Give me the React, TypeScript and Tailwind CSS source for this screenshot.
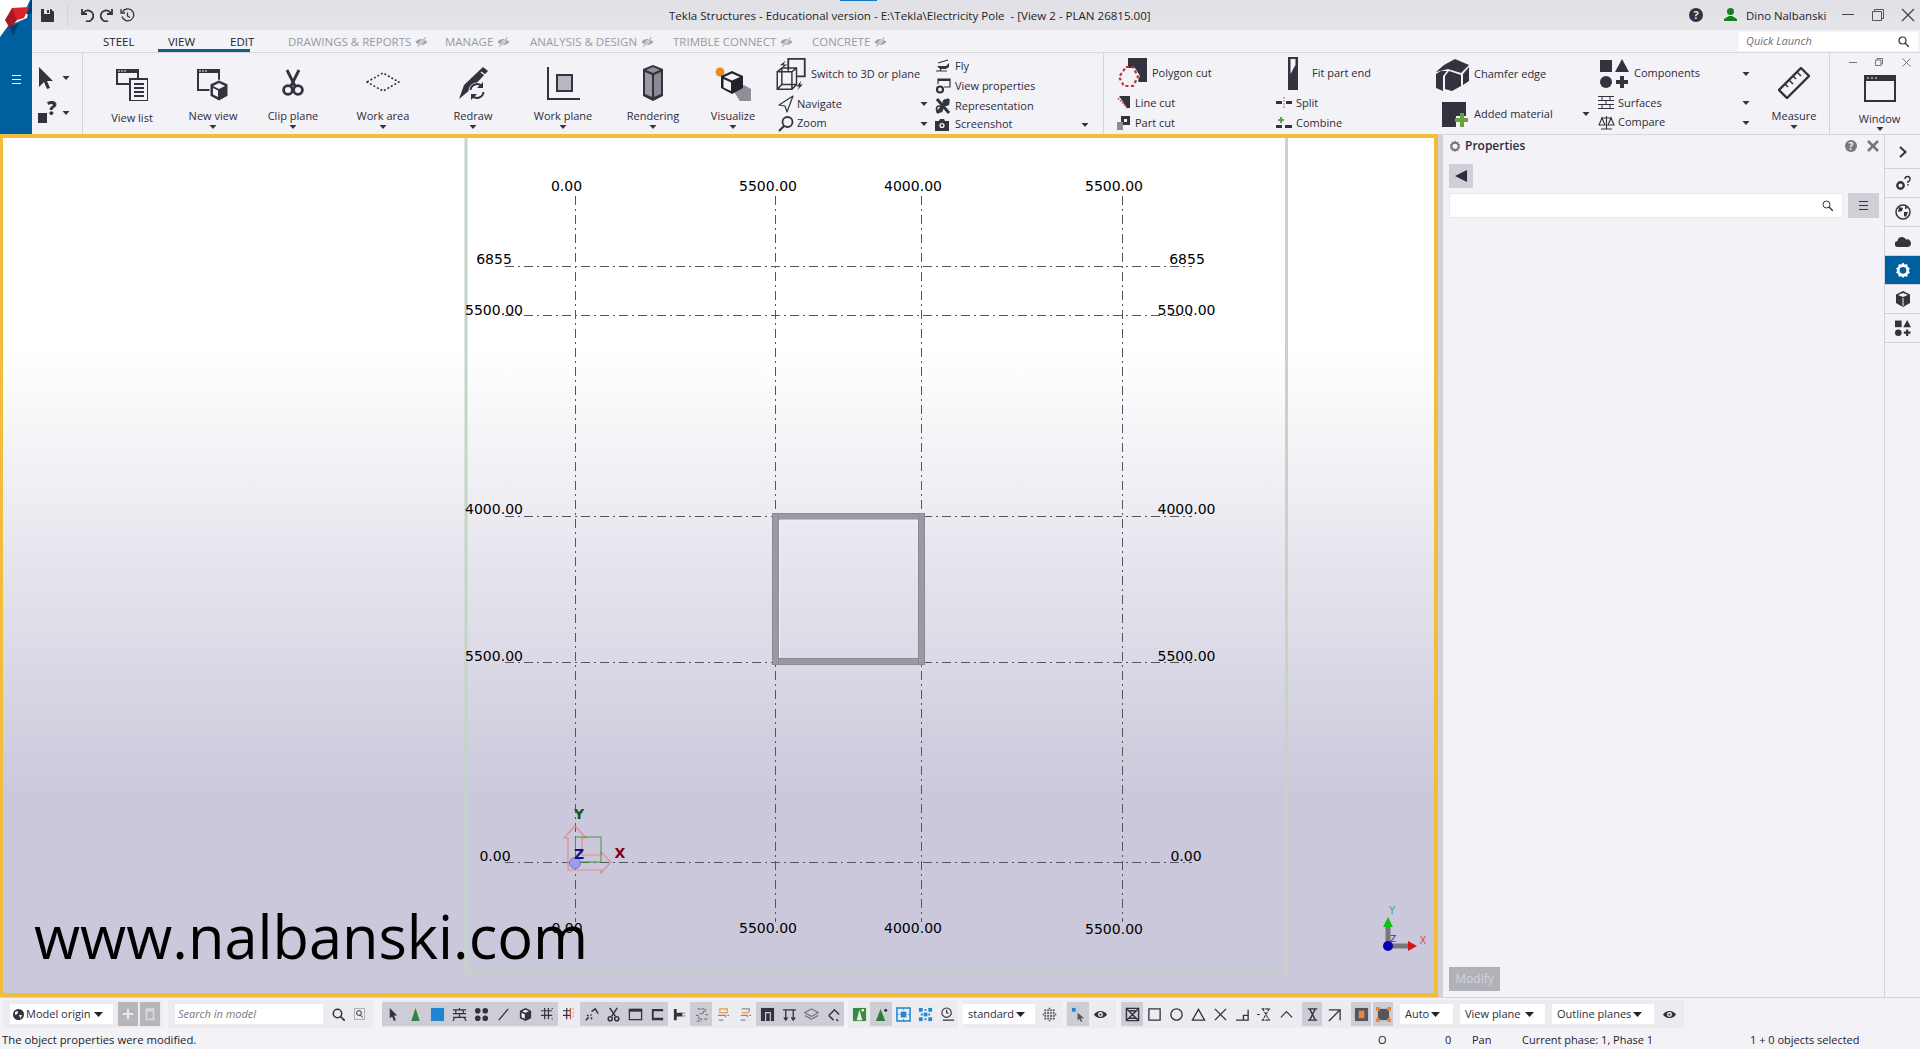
import React from "react";

const D = "#33333f";

const Svg = ({ w, h, vb, children, className = "" }: { w: number; h: number; vb?: string; children: React.ReactNode; className?: string }) => (
  <svg width={w} height={h} viewBox={vb ?? `0 0 ${w} ${h}`} className={`flex-none ${className}`} fill="none">
    {children}
  </svg>
);

const Caret = ({ className = "" }: { className?: string }) => (
  <Svg w={8} h={4} className={className}>
    <path d="M0.5 0H7.5L4 4Z" fill={D} />
  </Svg>
);

const EyeOff = () => (
  <Svg w={13} h={10} className="ml-1">
    <path d="M0.5 5C3 1 9 1 12.5 5C9 9 3 9 0.5 5Z" fill="#a3a3aa" />
    <circle cx="6.5" cy="5" r="1.6" fill="#f2f2f7" />
    <path d="M2.5 9.5L10.5 0.5" stroke="#f2f2f7" strokeWidth="2.4" />
    <path d="M2.5 9.5L10.5 0.5" stroke="#a3a3aa" strokeWidth="1.1" />
  </Svg>
);

/* ---------- ribbon icons ---------- */
const WinSmall = ({ x, y, w, h }: { x: number; y: number; w: number; h: number }) => (
  <g>
    <path d={`M${x + 1} ${y + 1}H${x + w - 1}V${y + h - 1}H${x + 1}Z`} stroke={D} strokeWidth="2" />
    <rect x={x} y={y} width={w} height={4} fill={D} />
    <path d={`M${x + 2} ${y + 2}h2m1 0h2m1 0h2`} stroke="#f2f2f7" strokeWidth="1" />
  </g>
);

const ViewListIcon = () => (
  <Svg w={32} h={32} className="mt-[3px]">
    <WinSmall x={0} y={0} w={23} h={16} />
    <rect x={14} y={10} width={18} height={22} fill="#f2f2f7" stroke={D} strokeWidth="2" />
    <path d="M18 15h10M18 19h10M18 23h10M18 27h10" stroke={D} strokeWidth="2" />
  </Svg>
);
const NewViewIcon = () => (
  <Svg w={32} h={32} className="mt-[3px]">
    <WinSmall x={0} y={0} w={23} h={22} />
    <path d="M22 11L31 15V27L22 32L13 27V15Z" fill={D} stroke="#f2f2f7" strokeWidth="1" />
    <path d="M16 17L22 20L28 17L22 14Z" fill="#f2f2f7" />
    <path d="M16 19L21 21.5V28L16 25.5Z" fill="#f2f2f7" />
  </Svg>
);
const ScissorsIcon = () => (
  <Svg w={26} h={28}>
    <path d="M7 1L15 17M19 1L11 17" stroke={D} strokeWidth="2.8" />
    <circle cx="8" cy="21" r="4.4" stroke={D} strokeWidth="2.8" />
    <circle cx="18" cy="21" r="4.4" stroke={D} strokeWidth="2.8" />
  </Svg>
);
const WorkAreaIcon = () => (
  <Svg w={34} h={20} className="-mt-[3px]">
    <path d="M1 10L17 1L33 10L17 19Z" stroke={D} strokeWidth="1.6" strokeDasharray="2 2" />
  </Svg>
);
const RedrawIcon = () => (
  <Svg w={34} h={34}>
    <path d="M27 1L32 5L14 24L3 33L8 19Z" fill={D} />
    <path d="M25 6L29 9" stroke="#f2f2f7" strokeWidth="1.4" />
    <circle cx="21" cy="25" r="8.5" fill="#f2f2f7" />
    <path d="M14.5 24a6.5 6.5 0 0 1 11-4M27.5 26a6.5 6.5 0 0 1-11 4" stroke={D} strokeWidth="2" />
    <path d="M27 16V22H21Z M15 34V28H21Z" fill={D} />
  </Svg>
);
const WorkPlaneIcon = () => (
  <Svg w={33} h={33}>
    <path d="M1 0V32H33" stroke={D} strokeWidth="2" />
    <rect x={10} y={8} width={15} height={16} fill="#b8b8c2" stroke={D} strokeWidth="2" />
  </Svg>
);
const RenderingIcon = () => (
  <Svg w={20} h={36}>
    <path d="M10 0L20 4V31L10 36L0 31V4Z" fill={D} />
    <path d="M2 7L9 10V32L2 29Z" fill="#9a9aa3" />
    <path d="M18 7L11 10V32L18 29Z" fill="#8a8a94" />
    <path d="M3 5L10 2L17 5L10 8Z" fill="#8f8f99" />
  </Svg>
);
const VisualizeIcon = () => (
  <Svg w={36} h={36}>
    <circle cx="5" cy="7" r="4.5" fill="#ec8b1f" />
    <path d="M18 25L29 20L36 24V38H26Z" fill="#8f8f98" />
    <path d="M17 6L28 11V23L17 29L6 23V11Z" fill="#22222c" />
    <path d="M9 12L17 8.5L25 12L17 15.5Z" fill="#f2f2f7" />
    <path d="M8.5 14L16 17.5V26L8.5 22.5Z" fill="#f2f2f7" />
  </Svg>
);
const SwitchIcon = () => (
  <Svg w={32} h={33} vb="0 0 32 36">
    <path d="M13 14V1H31V20H22" stroke={D} strokeWidth="2" />
    <path d="M10 3L4 8H8L5 12L12 7H8Z" fill={D} />
    <path d="M1 15H17V34H1Z M1 15L6 11H22V29L17 34 M6 11V29H22 M6 29L1 34 M17 15L22 11" stroke={D} strokeWidth="1.6" />
    <path d="M27 25L22 31H25L23 35L29 29H26Z" fill={D} />
  </Svg>
);
const NavIcon = () => (
  <Svg w={16} h={18}>
    <path d="M15 1L1 10L7 11L9 17Z" stroke={D} strokeWidth="1.2" strokeLinejoin="round" />
  </Svg>
);
const ZoomIcon = () => (
  <Svg w={16} h={16}>
    <circle cx="9.5" cy="6" r="5" stroke={D} strokeWidth="1.8" />
    <path d="M6 10L1 15" stroke={D} strokeWidth="2.2" />
  </Svg>
);
const FlyIcon = () => (
  <Svg w={16} h={14}>
    <path d="M2 7H11L14 4V8L11 10H5Z" fill={D} />
    <path d="M3 4L13 1M1 12H12M6 10L5 12" stroke={D} strokeWidth="1.2" />
  </Svg>
);
const ViewPropIcon = () => (
  <Svg w={16} h={16}>
    <path d="M3 6V1H15V9H9" stroke={D} strokeWidth="1.2" />
    <path d="M3 1H15V3H3Z" fill={D} />
    <circle cx="5" cy="11.5" r="3" stroke={D} strokeWidth="2.2" />
  </Svg>
);
const ReprIcon = () => (
  <Svg w={16} h={16}>
    <path d="M2 1L14 15M14 1L2 15" stroke={D} strokeWidth="3" />
    <circle cx="11" cy="4.5" r="3.5" fill={D} />
    <circle cx="4.5" cy="11" r="3" stroke={D} strokeWidth="1.6" />
  </Svg>
);
const ShotIcon = () => (
  <Svg w={14} h={12}>
    <path d="M0 2H4L5 0H9L10 2H14V12H0Z" fill={D} />
    <circle cx="7" cy="6.5" r="2.6" fill="#f2f2f7" />
    <circle cx="7" cy="6.5" r="1.2" fill={D} />
  </Svg>
);
const PolygonCutIcon = () => (
  <Svg w={31} h={31}>
    <path d="M11 0H30V24H22L11 9Z" fill={D} />
    <path d="M7 10H18L23 18L18 29H7L2 20Z" fill="#f2f2f7" />
    <path d="M9 9H16L21 19L16 28H7L2 19Z" stroke="#b33a3a" strokeWidth="2.2" strokeDasharray="3 2.5" />
  </Svg>
);
const LineCutIcon = () => (
  <Svg w={13} h={14}>
    <path d="M2 0H13V12H10Z" fill={D} />
    <path d="M1 2L11 13" stroke="#c0504d" strokeWidth="1.2" strokeDasharray="2 1" />
  </Svg>
);
const PartCutIcon = () => (
  <Svg w={13} h={14}>
    <rect x={4} y={0} width={9} height={9} fill={D} />
    <rect x={7} y={3} width={3} height={3} fill="#f2f2f7" />
    <rect x={0} y={6} width={6} height={8} fill="#8e8e98" />
  </Svg>
);
const FitIcon = () => (
  <Svg w={10} h={33}>
    <path d="M0 0H10V33H0Z" fill={D} />
    <path d="M2.5 2H7.5V8L2.5 17Z" fill="#f2f2f7" />
  </Svg>
);
const SplitIcon = () => (
  <Svg w={16} h={12}>
    <path d="M0 4h6v3H0ZM10 4h6v3h-6Z" fill={D} />
    <path d="M8 0V12" stroke="#b56a6a" strokeWidth="1" strokeDasharray="2 1" />
  </Svg>
);
const CombineIcon = () => (
  <Svg w={16} h={12}>
    <path d="M0 8h6v3H0ZM9 8h7v3H9Z" fill={D} />
    <path d="M5 0V6M2 3H8" stroke="#62a03c" strokeWidth="2" />
  </Svg>
);
const ChamferIcon = () => (
  <Svg w={33} h={32}>
    <path d="M0 13L8 6L19 0L33 6L25 14L12 10Z" fill={D} />
    <path d="M27 15L33 8V22L27 26Z" fill={D} />
    <path d="M0 15L5 12L11 12L7 17V32L0 29Z" fill={D} />
    <path d="M9 17L13 12L25 16V27L16 32L9 30Z" fill={D} />
  </Svg>
);
const AddedIcon = () => (
  <Svg w={26} h={25}>
    <path d="M0 0H24V14H14V25H0Z" fill={D} />
    <path d="M20 11V25M13 18H26" stroke="#66a33f" strokeWidth="4" />
  </Svg>
);
const ComponentsIcon = ({ s = 29 }: { s?: number }) => (
  <Svg w={s} h={s} vb="0 0 29 29">
    <rect x={0} y={1} width={12} height={12} fill={D} />
    <path d="M22 0L29 13H15Z" fill={D} />
    <circle cx="6" cy="23" r="6" fill={D} />
    <path d="M22 17V29M16 23H28" stroke={D} strokeWidth="4" />
  </Svg>
);
const SurfacesIcon = () => (
  <Svg w={16} h={16}>
    <path d="M0 1.5H16M0 5.5H16M0 9.5H16M0 13.5H16M4 1.5V5.5M12 1.5V5.5M8 5.5V9.5M4 9.5V13.5M12 9.5V13.5" stroke={D} strokeWidth="1" />
  </Svg>
);
const CompareIcon = () => (
  <Svg w={17} h={16}>
    <path d="M8.5 1V14M3 14H14M3 3H14M4 3L1 10H7ZM13 3L10 10H16Z" stroke={D} strokeWidth="1.1" />
  </Svg>
);
const MeasureIcon = () => (
  <Svg w={32} h={32}>
    <path d="M23 1L31 9L9 31L1 23Z" stroke={D} strokeWidth="2.4" />
    <path d="M7 17L10 20M11 13L15 17M15 9L18 12M19 5L23 9" stroke={D} strokeWidth="1.6" />
  </Svg>
);
const WindowIcon = () => (
  <Svg w={32} h={27}>
    <path d="M1 1H31V26H1Z" stroke={D} strokeWidth="2" />
    <rect x={0} y={0} width={32} height={6} fill={D} />
    <path d="M3 3h2m2 0h2m2 0h2" stroke="#f2f2f7" strokeWidth="1.2" />
  </Svg>
);

const Big = ({ w, label, icon, caret, low }: { w: string; label: string; icon: React.ReactNode; caret?: boolean; low?: boolean }) => (
  <div className={`${w} flex-none flex flex-col items-center`}>
    <div className="h-[55px] pt-[5px] flex items-center justify-center">{icon}</div>
    <div className={`h-[16px] leading-[16px] whitespace-nowrap ${low ? "mt-[2px]" : ""}`}>{label}</div>
    {caret && <Caret className="mt-[1px]" />}
  </div>
);

const Row = ({ h = "h-[20px]", className = "", children }: { h?: string; className?: string; children: React.ReactNode }) => (
  <div className={`${h} flex items-center whitespace-nowrap ${className}`}>{children}</div>
);

/* ---------- toolbar icons ---------- */
const tb: Record<string, React.ReactNode> = {
  arrow: <path d="M4 1L12 9H8.5L10.5 14L8.5 15L6.5 10L4 12Z" fill={D} />,
  cone: <path d="M8 1L12.5 15H3.5Z" fill="#2e8540" />,
  blue: <rect x={1} y={1} width={14} height={14} fill="#1f86cf" />,
  brick: <path d="M1 3H15M1 7H15M1 11H15M8 1V3M4 3V7M12 3V7M8 7V11M3 11L1 15M13 11L15 15" stroke={D} strokeWidth="1.3" />,
  dots: (
    <g fill={D}>
      <circle cx="4" cy="4" r="3" />
      <circle cx="12" cy="4" r="3" />
      <circle cx="4" cy="12" r="3" />
      <circle cx="12" cy="12" r="3" />
    </g>
  ),
  line: <path d="M3 14L13 2" stroke={D} strokeWidth="1.4" />,
  cube: (
    <g>
      <path d="M8 1L14 4V12L8 15L2 12V4Z" fill={D} />
      <path d="M4.5 4.5L8 3L11.5 4.5L8 6Z" fill="#f2f2f7" />
      <path d="M3.8 6L7.2 7.6V12.6L3.8 11Z" fill="#f2f2f7" />
    </g>
  ),
  hash: <path d="M5 1V13M9 1V13M1 4H13M1 9H13M13 1V2M13 12V13" stroke={D} strokeWidth="1.3" />,
  hashc: (
    <g strokeWidth="1.3">
      <path d="M5 1V13M1 4H9M1 9H9" stroke={D} />
      <path d="M9 1V13" stroke="#c0504d" />
      <path d="M12 1V13" stroke="#e5a64b" strokeDasharray="2 2" />
    </g>
  ),
  scatter: <path d="M2 14L5 11M7 9L8 8M3 9h2M8 13v-2M8 5L12 2L15 7" stroke={D} strokeWidth="1.6" />,
  scissor: (
    <g stroke={D} strokeWidth="1.6">
      <path d="M4 1L10 10M12 1L6 10" />
      <circle cx="4.5" cy="12.5" r="2.2" />
      <circle cx="11.5" cy="12.5" r="2.2" />
    </g>
  ),
  win: (
    <g>
      <path d="M1.5 2.5H14.5V13.5H1.5Z" stroke={D} strokeWidth="1.4" />
      <rect x={1} y={2} width={14} height={3} fill={D} />
    </g>
  ),
  hbeam: <path d="M2 2H14V4.5H4V11.5H14V14H2Z" fill={D} />,
  tbar: (
    <g>
      <path d="M2 2H5V14H2ZM5 6H11V10H5Z" fill={D} />
      <path d="M11 6.5H15M11 9.5H15" stroke={D} strokeDasharray="1 1" />
    </g>
  ),
  stackg: <path d="M4 2H12V5H10V7H5M2 9H5V13H9M12 8H14V10M3 15H8M11 13H14" stroke="#777782" strokeWidth="1.3" strokeDasharray="3 1" />,
  stacko: (
    <g strokeWidth="1.3">
      <path d="M4 2H12V6H4Z" stroke="#e89a4c" />
      <path d="M2 9H10V11M3 14H8M12 9H14" stroke="#8a8a94" />
    </g>
  ),
  stackm: (
    <g strokeWidth="1.3">
      <path d="M4 2H12V5" stroke="#8a8a94" />
      <path d="M4 6H12" stroke="#e89a4c" />
      <path d="M3 9H10V11M3 14H8M12 9H14" stroke="#8a8a94" />
    </g>
  ),
  dark: (
    <g>
      <rect x={1} y={1} width={14} height={14} fill={D} />
      <path d="M6 15V6H11V15" stroke="#d0d0d8" strokeWidth="1.2" />
    </g>
  ),
  pi: <path d="M1 3H15M4 3V13M12 3V13M2 11L4 14L6 11M10 11L12 14L14 11" stroke={D} strokeWidth="1.4" />,
  layers: (
    <g stroke="#66666f" strokeWidth="1.2">
      <path d="M8 2L15 6L8 10L1 6Z" />
      <path d="M1 9L8 13L15 9" />
    </g>
  ),
  corner: <path d="M3 9L9 3L14 8M3 9L8 14M11 13L13 15" stroke={D} strokeWidth="1.6" />,
  gbox: (
    <g>
      <rect x={1} y={1} width={14} height={14} fill="#3c8a3e" />
      <path d="M8 3L11 14H5Z" fill="#e8efe8" />
      <circle cx="11.5" cy="3.5" r="1.4" fill="#fff" />
    </g>
  ),
  gcone: (
    <g>
      <path d="M7 2L12 15H2Z" fill="#2e7d3a" />
      <circle cx="12.5" cy="3.5" r="1.6" fill={D} />
    </g>
  ),
  bgrid: (
    <g>
      <path d="M1 1H15V15H1Z" stroke="#1f86cf" strokeWidth="1.6" />
      <path d="M5 5H11V11H5Z" fill="#1f86cf" />
      <path d="M8 1V15M1 8H15" stroke="#1f86cf" strokeDasharray="2 2" />
    </g>
  ),
  bgrid2: (
    <g fill="#1f86cf">
      <rect x={1} y={1} width={4} height={4} />
      <rect x={11} y={1} width={4} height={4} />
      <rect x={1} y={11} width={4} height={4} />
      <rect x={11} y={11} width={4} height={4} />
      <rect x={6} y={6} width={4} height={4} />
      <path d="M3 7h2v2H3ZM11 7h2v2h-2ZM7 2h2v2H7ZM7 12h2v2H7Z" />
    </g>
  ),
  clock: (
    <g stroke={D} strokeWidth="1.2">
      <circle cx="7" cy="6" r="5" />
      <path d="M7 3V6L9 7M3 14H15" />
    </g>
  ),
  sphere: (
    <g fill="#66666f">
      {[3, 6, 9, 12].flatMap((x) => [3, 6, 9, 12].map((y) => <circle key={`${x}${y}`} cx={x + 0.5} cy={y + 0.5} r={1.2} />))}
      <circle cx="8" cy="1.5" r="1" />
      <circle cx="8" cy="14.5" r="1" />
      <circle cx="1.5" cy="8" r="1" />
      <circle cx="14.5" cy="8" r="1" />
    </g>
  ),
  selpt: (
    <g>
      <rect x={1} y={1} width={4} height={4} fill="#1f86cf" />
      <path d="M7 6L14 12H10.5L12 15.5L10.5 16L9 12.5L7 14.5Z" fill="#55555f" />
    </g>
  ),
  eye: (
    <g>
      <path d="M1 8C4 3 12 3 15 8C12 13 4 13 1 8Z" fill={D} />
      <circle cx="8" cy="8" r="2.6" fill="#f2f2f7" />
      <circle cx="8" cy="8" r="1.2" fill={D} />
    </g>
  ),
  xbox: <path d="M1.5 1.5H14.5V14.5H1.5ZM1.5 1.5L14.5 14.5M14.5 1.5L1.5 14.5M5 4H11M5 12H11" stroke={D} strokeWidth="1.5" />,
  sq: <path d="M2 2H14V14H2Z" stroke={D} strokeWidth="1.4" />,
  circ: <circle cx="8" cy="8" r="6" stroke={D} strokeWidth="1.4" />,
  tri: <path d="M8 2.5L14.5 14H1.5Z" stroke={D} strokeWidth="1.4" />,
  x: <path d="M2 2L14 14M14 2L2 14" stroke={D} strokeWidth="1.4" />,
  angle: <path d="M1 14H14V3M9 14V9H14" stroke={D} strokeWidth="1.4" />,
  hour: <path d="M5 2H14M5 14H14M6 2L13 14M13 2L6 14M0 8H3" stroke={D} strokeWidth="1.1" strokeDasharray="3 1" />,
  chev: <path d="M2 11L8 5L14 11" stroke={D} strokeWidth="1.3" />,
  hour2: <path d="M3 2H13M3 14H13M5 2L11 14M11 2L5 14" stroke={D} strokeWidth="1.5" />,
  diag: <path d="M2 3H14V14M14 3L2 15" stroke={D} strokeWidth="1.4" />,
  ocen: (
    <g>
      <rect x={1} y={1} width={14} height={14} fill="#55555f" />
      <rect x={5} y={4} width={6} height={8} fill="#e8853a" />
    </g>
  ),
  ocor: (
    <g>
      <rect x={2} y={2} width={12} height={12} fill="#55555f" />
      <path d="M0 0h4v4H0ZM12 0h4v4h-4ZM0 12h4v4H0ZM12 12h4v4h-4Z" fill="#e8853a" />
    </g>
  ),
  plus: <path d="M8 2V14M2 8H14" stroke="#e8e8ee" strokeWidth="2.4" />,
  trash: <path d="M4 4H12V14H4ZM3 2.5H13" stroke="#d8d8e0" strokeWidth="2" />,
};

const Tb = ({ n, on, w = "w-[22px]" }: { n: string; on?: boolean; w?: string }) => (
  <div className={`${w} h-[24px] flex-none flex items-center justify-center ${on ? "bg-[#cdcdd6]" : ""}`}>
    <Svg w={15} h={15} vb="0 0 16 16">
      {tb[n]}
    </Svg>
  </div>
);

const Drop = ({ w, label, gap = "gap-[2px]" }: { w: string; label: string; gap?: string }) => (
  <div className={`${w} h-[20px] flex-none bg-white flex items-center pl-[5px] ${gap} whitespace-nowrap`}>
    <span>{label}</span>
    <svg width="9" height="5" viewBox="0 0 9 5" className="flex-none">
      <path d="M0 0H9L4.5 5Z" fill="#22222c" />
    </svg>
  </div>
);

/* ---------- drawing ---------- */
const xs = [575.5, 775.5, 921.5, 1122.5];
const ys = [266.5, 315.5, 516.5, 662.5, 862.5];
const Lbl = ({ x, y, t }: { x: number; y: number; t: string }) => (
  <text x={x} y={y + 5} textAnchor="middle" fill="#000" fontSize="14">
    {t}
  </text>
);

const Drawing = () => (
  <svg viewBox="0 134 1438 863" className="absolute inset-0 w-full h-full font-['DejaVu_Sans']">
    <path d="M466 134V972H1286.5V134" stroke="#c6d4c6" strokeWidth="3" fill="none" />
    <path d="M467 971.5H1286" stroke="#b4d4b4" strokeWidth="1" />
    {xs.map((x) => (
      <path key={x} d={`M${x} 196V922`} stroke="#55555f" strokeDasharray="9 4 2 4" shapeRendering="crispEdges" />
    ))}
    {ys.map((y) => (
      <path key={y} d={`M505 ${y}H1192`} stroke="#55555f" strokeDasharray="9 4 2 4" shapeRendering="crispEdges" />
    ))}
    <g fill="#9b9aa4" stroke="#8b8a94">
      <rect x="772.5" y="513.5" width="152" height="6" />
      <rect x="772.5" y="658.5" width="152" height="6" />
      <rect x="772.5" y="513.5" width="6" height="151" />
      <rect x="918.5" y="513.5" width="6" height="151" />
    </g>
    <path d="M779.5 520H918M779.5 520V658" stroke="#f4f4f8" />

    {[
      [566.5, 186, "0.00"], [768, 186, "5500.00"], [913, 186, "4000.00"], [1114, 186, "5500.00"],
      [494, 259, "6855"], [1187, 259, "6855"],
      [494, 310, "5500.00"], [1186.5, 310, "5500.00"],
      [494, 509, "4000.00"], [1186.5, 509, "4000.00"],
      [494, 655.5, "5500.00"], [1186.5, 655.5, "5500.00"],
      [495, 856, "0.00"], [1186, 856, "0.00"],
      [567, 928, "0.00"], [768, 928, "5500.00"], [913, 928, "4000.00"], [1114, 929, "5500.00"],
    ].map(([x, y, t]) => (
      <Lbl key={`${x}-${y}`} x={x as number} y={y as number} t={t as string} />
    ))}

    <path d="M568 870V838H564L575 826L586 838H582V855H601V852L611 862L601 873V870Z" stroke="#e58a8a" strokeWidth="1.2" fill="none" />
    <path d="M575.5 837H601V862H575.5Z" stroke="#3d9a3d" strokeWidth="1" fill="none" />
    <circle cx="575" cy="863" r="5.5" fill="#9d9de8" stroke="#7777dd" />
    <text x="579" y="819" textAnchor="middle" fontSize="14" fontWeight="700" fill="#0a5a20">Y</text>
    <text x="620" y="858" textAnchor="middle" fontSize="14" fontWeight="700" fill="#800010">X</text>
    <text x="579" y="859" textAnchor="middle" fontSize="14" fontWeight="700" fill="#10108f">Z</text>

    <text x="34" y="958.5" fontSize="59.5" fill="#000" className="font-['Open_Sans']">www.nalbanski.com</text>

    <path d="M1388 946V925M1388 946H1408" stroke="#77777f" strokeWidth="5" />
    <path d="M1388 917L1393 927H1383Z" fill="#12c012" />
    <path d="M1417 946L1408 951V941Z" fill="#d81414" />
    <circle cx="1388" cy="946" r="5" fill="#0000b0" />
    <text x="1392" y="914" textAnchor="middle" fontSize="10" fill="#3cb050">Y</text>
    <text x="1423" y="944" textAnchor="middle" fontSize="10" fill="#d05050">X</text>
    <text x="1393" y="942" textAnchor="middle" fontSize="9" fill="#3030d0">Z</text>
  </svg>
);

const RailItem = ({ active, children }: { active?: boolean; children: React.ReactNode }) => (
  <div className={`h-[29px] flex-none flex items-center justify-center border-b border-[#d3d3da] ${active ? "bg-[#00609f]" : ""}`}>
    {children}
  </div>
);

const Gear = ({ c = D, s = 16, hole = "#f2f2f7" }: { c?: string; s?: number; hole?: string }) => (
  <svg width={s} height={s} viewBox="0 0 16 16" className="flex-none">
    <path d="M8 0.5L9.6 2.6L12.3 2.2L12.7 4.9L15 6.2L13.7 8.5L15 10.8L12.7 12L12.3 14.7L9.6 14.3L8 16L6.4 14.3L3.7 14.7L3.3 12L1 10.8L2.3 8.5L1 6.2L3.3 4.9L3.7 2.2L6.4 2.6Z" fill={c} />
    <circle cx="8" cy="8.3" r="3.4" fill={hole} />
  </svg>
);

export default function App() {
  return (
    <div className="w-[1920px] h-[1049px] overflow-hidden flex flex-col bg-[#f2f2f7] text-[#2c2c3a] text-[11px] font-['Open_Sans',sans-serif]">
      {/* top */}
      <div className="h-[134px] flex-none flex">
        <div className="w-[32px] flex-none bg-[#00609f] flex flex-col items-center">
          <svg width="32" height="37" viewBox="0 0 32 37" className="flex-none">
            <path d="M0 0H30L26 9L29 7L27 18L8 26L0 37Z" fill="#fff" />
            <path d="M31 0L26 14H32V0Z" fill="#003f73" />
            <path d="M12 8L29 7L24 18L10 22Z" fill="#d8232f" />
            <path d="M12 8L5 20L10 29L17 20Z" fill="#a81822" />
            <path d="M10 27L19 23L13 36Z" fill="#003f73" />
          </svg>
          <div className="mt-[38px] flex flex-col gap-[3px] w-[9px]">
            <div className="h-px bg-white" />
            <div className="h-px bg-white" />
            <div className="h-px bg-white" />
          </div>
        </div>
        <div className="flex-1 flex flex-col min-w-0">
          {/* title bar */}
          <div className="relative h-[30px] flex-none flex items-center bg-[linear-gradient(180deg,#dfdfe5,#e5e5ea)]">
            <div className="absolute top-0 left-[808px] w-[37px] h-px bg-[#0f78c8]" />
            <div className="w-[637px] flex-none flex items-center pl-[9px]">
              <Svg w={13} h={13}>
                <path d="M0 0H10L13 3V13H0Z" fill={D} />
                <rect x={3} y={0} width={6} height={5} fill="#e3e3e8" />
                <rect x={6} y={1} width={2} height={3} fill={D} />
              </Svg>
              <div className="ml-[13px] w-px h-[22px] bg-[#d3d3da]" />
              <Svg w={14} h={14} className="ml-[12px]">
                <path d="M2 1V6H7M3 5.5A5.4 5.4 0 1 1 6 13" stroke={D} strokeWidth="1.8" />
              </Svg>
              <Svg w={14} h={14} className="ml-[6px]">
                <path d="M12 1V6H7M11 5.5A5.4 5.4 0 1 0 8 13" stroke={D} strokeWidth="1.8" />
              </Svg>
              <Svg w={15} h={15} className="ml-[6px]">
                <path d="M2.5 4A6 6 0 1 1 2 8.5M1 1V5H5M7.5 4.5V8L10 9.5" stroke={D} strokeWidth="1.3" />
              </Svg>
            </div>
            <div className="whitespace-pre pt-[2px] text-[11.55px] text-[#22222c]">{"Tekla Structures - Educational version - E:\\Tekla\\Electricity Pole  - [View 2 - PLAN 26815.00]"}</div>
            <div className="ml-auto flex items-center pr-[5px]">
              <svg width="14" height="14" viewBox="0 0 14 14" className="flex-none">
                <circle cx="7" cy="7" r="7" fill={D} />
                <text x="7" y="11" textAnchor="middle" fontSize="11" fontWeight="700" fill="#e3e3e8">?</text>
              </svg>
              <Svg w={13} h={13} className="ml-[21px]">
                <circle cx="6.5" cy="3.5" r="3.5" fill="#13801f" />
                <path d="M0 13V11L5 8H8L13 11V13Z" fill="#13801f" />
              </Svg>
              <span className="ml-[9px] w-[96px] pt-[2px] text-[11.4px] text-[#22222c] whitespace-nowrap">Dino Nalbanski</span>
              <div className="w-[12px] h-px bg-[#44444f]" />
              <Svg w={12} h={12} className="ml-[18px]">
                <path d="M2.5 2.5V0.5H11.5V9.5H9.5M0.5 2.5H9.5V11.5H0.5Z" stroke="#55555f" />
              </Svg>
              <Svg w={14} h={14} className="ml-[17px]">
                <path d="M1 1L13 13M13 1L1 13" stroke="#44444f" strokeWidth="1.3" />
              </Svg>
            </div>
          </div>
          {/* tabs */}
          <div className="relative h-[23px] flex-none flex items-center pl-[71px] pt-[2px] border-b border-[#d6d6dc] text-[11.5px] text-[#9a9aa2] whitespace-nowrap">
            <div className="w-[65px] text-[#22222c]">STEEL</div>
            <div className="w-[62px] text-[#22222c]">VIEW</div>
            <div className="w-[58px] text-[#22222c]">EDIT</div>
            <div className="w-[157px] flex items-center">DRAWINGS &amp; REPORTS<EyeOff /></div>
            <div className="w-[85px] flex items-center">MANAGE<EyeOff /></div>
            <div className="w-[143px] flex items-center">ANALYSIS &amp; DESIGN<EyeOff /></div>
            <div className="w-[139px] flex items-center">TRIMBLE CONNECT<EyeOff /></div>
            <div className="flex items-center">CONCRETE<EyeOff /></div>
            <div className="absolute right-[2px] top-[2px] w-[179px] h-[19px] bg-white flex items-center pl-[7px] italic text-[11px] text-[#6e6e78]">
              Quick Launch
              <Svg w={11} h={11} className="ml-auto mr-[9px]">
                <circle cx="4.5" cy="4.5" r="3.5" stroke="#33333f" strokeWidth="1.2" />
                <path d="M7 7L11 11" stroke="#33333f" strokeWidth="1.4" />
              </Svg>
            </div>
            <div className="absolute left-[126px] bottom-0 w-[92px] h-[3px] bg-[#0e5f8e]" />
          </div>
          {/* ribbon */}
          <div className="h-[81px] flex-none flex">
            <div className="w-[51px] flex-none border-r border-[#d6d6dc] flex flex-col pl-[6px]">
              <div className="h-[44px] flex items-center pt-[6px]">
                <Svg w={15} h={22}>
                  <path d="M1 0L15 14H9L12 21L9 22L6 15L1 20Z" fill={D} />
                </Svg>
                <Caret className="ml-[9px]" />
              </div>
              <div className="h-[36px] flex items-start -mt-[3px]">
                <Svg w={22} h={29}>
                  <rect x={0} y={19} width={9} height={10} fill={D} />
                  <text x={9} y={21} fontSize="19" fontWeight="800" fill={D}>?</text>
                </Svg>
                <Caret className="ml-[2px] mt-[17px]" />
              </div>
            </div>
            <Big w="w-[98px]" label="View list" icon={<ViewListIcon />} low />
            <Big w="w-[64px]" label="New view" icon={<NewViewIcon />} caret />
            <Big w="w-[96px]" label="Clip plane" icon={<ScissorsIcon />} caret />
            <Big w="w-[84px]" label="Work area" icon={<WorkAreaIcon />} caret />
            <Big w="w-[96px]" label="Redraw" icon={<RedrawIcon />} caret />
            <Big w="w-[84px]" label="Work plane" icon={<WorkPlaneIcon />} caret />
            <Big w="w-[96px]" label="Rendering" icon={<RenderingIcon />} caret />
            <Big w="w-[64px]" label="Visualize" icon={<VisualizeIcon />} caret />

            <div className="w-[165px] flex-none flex flex-col pr-[2px]">
              <Row h="h-[44px]" className="pl-[10px] gap-[4px]"><SwitchIcon />Switch to 3D or plane</Row>
              <Row h="h-[18px]" className="pl-[13px] gap-[3px]"><NavIcon />Navigate<Caret className="ml-auto" /></Row>
              <Row h="h-[22px]" className="pl-[13px] gap-[3px]"><ZoomIcon />Zoom<Caret className="ml-auto" /></Row>
            </div>
            <div className="w-[173px] flex-none flex flex-col pt-[3px] pl-[5px] pr-[14px]">
              <Row className="gap-[4px]"><FlyIcon />Fly</Row>
              <Row className="gap-[4px]"><ViewPropIcon />View properties</Row>
              <Row className="gap-[4px]"><ReprIcon />Representation</Row>
              <Row h="h-[17px]" className="gap-[6px]"><ShotIcon />Screenshot<Caret className="ml-auto" /></Row>
            </div>

            <div className="w-[167px] flex-none flex flex-col border-l border-[#d6d6dc]">
              <Row h="h-[44px]" className="pl-[13px] gap-[4px]"><PolygonCutIcon />Polygon cut</Row>
              <Row h="h-[19px]" className="pl-[13px] gap-[5px]"><LineCutIcon />Line cut</Row>
              <Row h="h-[24px]" className="pl-[13px] gap-[5px]"><PartCutIcon />Part cut</Row>
            </div>
            <div className="w-[160px] flex-none flex flex-col">
              <Row h="h-[44px]" className="pl-[18px] gap-[14px]"><FitIcon />Fit part end</Row>
              <Row h="h-[19px]" className="pl-[6px] gap-[4px]"><SplitIcon />Split</Row>
              <Row h="h-[24px]" className="pl-[6px] gap-[4px]"><CombineIcon />Combine</Row>
            </div>
            <div className="w-[165px] flex-none flex flex-col pr-[5px]">
              <Row h="h-[43px]" className="pl-[6px] gap-[5px]"><ChamferIcon />Chamfer edge</Row>
              <Row h="h-[36px]" className="pl-[12px] gap-[6px]"><AddedIcon />Added material<Caret className="ml-auto" /></Row>
            </div>
            <div className="w-[160px] flex-none flex flex-col pr-[5px]">
              <Row h="h-[44px]" className="pl-[5px] gap-[5px]"><ComponentsIcon />Components<Caret className="ml-auto" /></Row>
              <Row h="h-[18px]" className="pl-[3px] gap-[4px]"><SurfacesIcon />Surfaces<Caret className="ml-auto" /></Row>
              <Row h="h-[24px]" className="pl-[3px] gap-[3px]"><CompareIcon />Compare<Caret className="ml-auto" /></Row>
            </div>
            <div className="pl-[4px] border-r border-[#d6d6dc]">
              <Big w="w-[70px]" label="Measure" icon={<MeasureIcon />} caret />
            </div>
            <div className="w-[90px] flex-none flex flex-col items-center pl-[9px]">
              <div className="h-[18px] flex items-center">
                <div className="w-[8px] h-px bg-[#77777f]" />
                <Svg w={8} h={8} className="ml-[18px]">
                  <path d="M2 2V0.5H7.5V6H6M0.5 2H6V7.5H0.5Z" stroke="#77777f" />
                </Svg>
                <Svg w={9} h={9} className="ml-[19px]">
                  <path d="M0.5 0.5L8.5 8.5M8.5 0.5L0.5 8.5" stroke="#77777f" />
                </Svg>
              </div>
              <div className="h-[34px] flex items-center"><WindowIcon /></div>
              <div className="mt-[6px] h-[16px] leading-[16px]">Window</div>
              <Caret />
            </div>
          </div>
        </div>
      </div>

      {/* middle */}
      <div className="h-[864px] flex-none flex border-b border-[#d3d3da]">
        <div className="relative w-[1438px] flex-none bg-[linear-gradient(180deg,#ffffff_25%,#cac8da_77%)]">
          <Drawing />
          <div className="absolute inset-0 border-y-[4px] border-l-[3px] border-r-[4px] border-[#efbe3c]" />
        </div>
        <div className="w-[5px] flex-none bg-[#d2d2d7]" />
        <div className="flex-1 flex flex-col border-t border-[#d6d6dc] pl-[6px] pr-[5px] min-w-0">
          <div className="h-[22px] flex-none flex items-center">
            <Gear c="#77777f" s={12} />
            <span className="ml-[4px] font-semibold text-[12px]">Properties</span>
            <svg width="12" height="12" viewBox="0 0 12 12" className="ml-auto flex-none">
              <circle cx="6" cy="6" r="6" fill="#77777f" />
              <text x="6" y="10" textAnchor="middle" fontSize="10" fontWeight="700" fill="#f2f2f7">?</text>
            </svg>
            <Svg w={12} h={12} className="ml-[10px]">
              <path d="M1 1L11 11M11 1L1 11" stroke="#77777f" strokeWidth="2.6" />
            </Svg>
          </div>
          <div className="mt-[7px] w-[24px] h-[24px] flex-none flex items-center justify-center bg-[#cfcfd8]">
            <Svg w={12} h={12}>
              <path d="M12 0V12L0 6Z" fill="#2c2c3a" />
            </Svg>
          </div>
          <div className="mt-[5px] h-[25px] flex-none flex gap-[5px]">
            <div className="flex-1 bg-white flex items-center justify-end pr-[9px] border border-[#e8e8ee]">
              <Svg w={11} h={11}>
                <circle cx="4.5" cy="4.5" r="3.5" stroke="#33333f" />
                <path d="M7 7L11 11" stroke="#33333f" strokeWidth="1.4" />
              </Svg>
            </div>
            <div className="w-[31px] flex-none bg-[#cfcfd8] flex flex-col items-center justify-center gap-[3px]">
              <div className="w-[9px] h-px bg-[#33333f]" />
              <div className="w-[9px] h-px bg-[#33333f]" />
              <div className="w-[9px] h-px bg-[#33333f]" />
            </div>
          </div>
          <div className="flex-1" />
          <div className="mb-[6px] w-[51px] h-[24px] flex-none flex items-center justify-center bg-[#b1b1b9] text-[#d2d2d8] text-[12px]">Modify</div>
        </div>
        <div className="w-[36px] flex-none flex flex-col border-l border-[#d3d3da]">
          <div className="h-[35px] flex-none flex items-center justify-center border-b border-t border-[#d3d3da]">
            <Svg w={8} h={12}>
              <path d="M1 1L6.5 6L1 11" stroke={D} strokeWidth="2" />
            </Svg>
          </div>
          <RailItem>
            <Svg w={16} h={16}>
              <circle cx="5.5" cy="10.5" r="3.2" stroke={D} strokeWidth="2.4" />
              <path d="M10 4A2.5 2.5 0 1 1 13 6.5V8M13 9V10.5" stroke={D} strokeWidth="1.4" />
            </Svg>
          </RailItem>
          <RailItem>
            <Svg w={16} h={16}>
              <circle cx="8" cy="8" r="7" stroke={D} strokeWidth="1.5" />
              <path d="M4 3L8 4L7 7L3 8ZM9 8H13L11 13L9 12ZM10 2L13 4L10 5Z" fill={D} />
            </Svg>
          </RailItem>
          <RailItem>
            <Svg w={16} h={11}>
              <path d="M3 11A3 3 0 0 1 2.5 5A4.5 4.5 0 0 1 11 3.5A3.8 3.8 0 0 1 13 11Z" fill={D} />
            </Svg>
          </RailItem>
          <RailItem active>
            <Gear c="#ffffff" s={16} hole="#00609f" />
          </RailItem>
          <RailItem>
            <Svg w={16} h={16}>
              <path d="M8 0L15 3.5V12L8 16L1 12V3.5Z" fill={D} />
              <path d="M3 4L8 2L13 4L8 6Z" fill="#f2f2f7" />
              <path d="M8 7V15" stroke="#f2f2f7" />
            </Svg>
          </RailItem>
          <RailItem>
            <ComponentsIcon s={16} />
          </RailItem>
        </div>
      </div>

      {/* toolbar */}
      <div className="h-[30px] flex-none flex items-center pl-[3px] pt-[2px]">
        <div className="w-[160px] h-[28px] flex-none flex items-center pl-[7px] bg-[#ebebf0]">
          <div className="w-[103px] h-[20px] flex-none bg-white flex items-center pl-[3px] gap-[2px] whitespace-nowrap">
            <Svg w={11} h={11}>
              <circle cx="5.5" cy="5.5" r="5.5" fill={D} />
              <path d="M2 3L5 2L4.5 5L2 6ZM6 6H9L7.5 9.5Z" fill="#fff" />
            </Svg>
            <span>Model origin</span>
            <svg width="9" height="5" viewBox="0 0 9 5" className="flex-none ml-[2px]">
              <path d="M0 0H9L4.5 5Z" fill="#22222c" />
            </svg>
          </div>
          <div className="ml-[5px] flex gap-[2px]">
            <div className="w-[20px] h-[24px] flex items-center justify-center bg-[#b5b5bc]"><Svg w={14} h={14} vb="0 0 16 16">{tb.plus}</Svg></div>
            <div className="w-[20px] h-[24px] flex items-center justify-center bg-[#b5b5bc]"><Svg w={14} h={14} vb="0 0 16 16">{tb.trash}</Svg></div>
          </div>
        </div>
        <div className="ml-[5px] w-[205px] h-[28px] flex-none flex items-center pl-[7px] bg-[#ebebf0]">
          <div className="w-[148px] h-[20px] flex-none bg-white flex items-center pl-[3px] italic text-[#77777f]">Search in model</div>
          <Svg w={13} h={13} className="ml-[9px]">
            <circle cx="5.5" cy="5.5" r="4.2" stroke={D} strokeWidth="1.5" />
            <path d="M8.5 8.5L13 13" stroke={D} strokeWidth="1.7" />
          </Svg>
          <Svg w={11} h={12} className="ml-[9px]">
            <path d="M0.5 0.5H10.5V11.5H0.5Z" stroke="#777782" strokeDasharray="1 1" />
            <circle cx="5" cy="5" r="2.4" stroke={D} />
            <path d="M6.5 7L8.5 9.5" stroke={D} />
          </Svg>
        </div>
        <div className="ml-[9px] h-[28px] flex-none flex items-center bg-[#ebebf0]">
          <Tb n="arrow" on /><Tb n="cone" on /><Tb n="blue" on /><Tb n="brick" on /><Tb n="dots" on /><Tb n="line" on /><Tb n="cube" on /><Tb n="hash" on /><Tb n="hashc" /><Tb n="scatter" on /><Tb n="scissor" on /><Tb n="win" on /><Tb n="hbeam" on /><Tb n="tbar" /><Tb n="stackg" on /><Tb n="stacko" /><Tb n="stackm" /><Tb n="dark" on /><Tb n="pi" on /><Tb n="layers" on /><Tb n="corner" on />
        </div>
        <div className="ml-[4px] h-[28px] flex-none flex items-center bg-[#ebebf0]">
          <Tb n="gbox" /><Tb n="gcone" on /><Tb n="bgrid" /><Tb n="bgrid2" /><Tb n="clock" />
        </div>
        <div className="ml-[5px] h-[28px] w-[100px] flex-none flex items-center bg-[#ebebf0]">
          <Drop w="w-[72px]" label="standard" />
          <Tb n="sphere" w="w-[28px]" />
        </div>
        <div className="ml-[2px] h-[28px] w-[51px] flex-none flex items-center pl-[2px] bg-[#ebebf0]">
          <Tb n="selpt" on /><Tb n="eye" />
        </div>
        <div className="ml-[5px] h-[28px] flex-none flex items-center bg-[#ebebf0] pr-[7px]">
          <Tb n="xbox" on /><Tb n="sq" /><Tb n="circ" /><Tb n="tri" /><Tb n="x" /><Tb n="angle" /><Tb n="hour" /><Tb n="chev" />
          <div className="w-[5px]" />
          <Tb n="hour2" on w="w-[20px]" />
          <Tb n="diag" w="w-[24px]" />
          <div className="w-[5px]" />
          <Tb n="ocen" on w="w-[20px]" />
          <div className="w-[2px]" />
          <Tb n="ocor" on w="w-[20px]" />
        </div>
        <div className="h-[28px] flex-none flex items-center gap-[7px] bg-[#ebebf0] pr-[6px]">
          <Drop w="w-[53px]" label="Auto" />
          <Drop w="w-[85px]" label="View plane" gap="gap-[5px]" />
          <Drop w="w-[102px]" label="Outline planes" />
          <Tb n="eye" w="w-[17px]" />
        </div>
      </div>

      {/* status */}
      <div className="flex-1 flex items-center pl-[2px] pt-[3px] whitespace-nowrap text-[#22222c]">
        <div className="w-[1376px] flex-none text-[11.3px]">The object properties were modified.</div>
        <div className="w-[67px] flex-none">O</div>
        <div className="w-[27px] flex-none">0</div>
        <div className="w-[50px] flex-none">Pan</div>
        <div className="w-[228px] flex-none">Current phase: 1, Phase 1</div>
        <div>1 + 0 objects selected</div>
      </div>
    </div>
  );
}
